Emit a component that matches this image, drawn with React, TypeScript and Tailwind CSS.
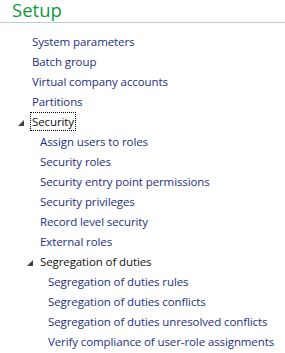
import React from 'react'

type Item = {
  label: string
  level: 1 | 2 | 3
  header?: boolean
  focused?: boolean
}

const items: Item[] = [
  { label: 'System parameters', level: 1 },
  { label: 'Batch group', level: 1 },
  { label: 'Virtual company accounts', level: 1 },
  { label: 'Partitions', level: 1 },
  { label: 'Security', level: 1, header: true, focused: true },
  { label: 'Assign users to roles', level: 2 },
  { label: 'Security roles', level: 2 },
  { label: 'Security entry point permissions', level: 2 },
  { label: 'Security privileges', level: 2 },
  { label: 'Record level security', level: 2 },
  { label: 'External roles', level: 2 },
  { label: 'Segregation of duties', level: 2, header: true },
  { label: 'Segregation of duties rules', level: 3 },
  { label: 'Segregation of duties conflicts', level: 3 },
  { label: 'Segregation of duties unresolved conflicts', level: 3 },
  { label: 'Verify compliance of user-role assignments', level: 3 },
]

const indent = {
  1: 'pl-[32px]',
  2: 'pl-[40px]',
  3: 'pl-[48px]',
} as const

function Expander() {
  return (
    <svg width="6" height="6" viewBox="0 0 6 6" className="absolute -left-[13px] top-[7px]">
      <polygon points="6,0 6,6 0,6" fill="#404040" />
    </svg>
  )
}

export default function App() {
  return (
    <div className="w-[285px] h-[353px] bg-white overflow-hidden font-['Open_Sans',sans-serif]">
      <div className="pl-[12px] h-[23px] border-b border-[#b9cde0] text-[18.5px] leading-[20px] text-[#0c9a3c]">
        Setup
      </div>
      <div className="pt-[9px]">
        {items.map((it) => (
          <div key={it.label} className={`h-[19.95px] flex items-center ${indent[it.level]}`}>
            <span
              className={`relative text-[11.5px] leading-[17px] tracking-[-0.1px] whitespace-nowrap ${
                it.header ? 'text-[#111]' : 'text-[#1e2f82]'
              } ${it.focused ? 'outline outline-1 outline-dotted outline-black px-[1px] -ml-[1px]' : ''}`}
            >
              {it.header && <Expander />}
              {it.label}
            </span>
          </div>
        ))}
      </div>
    </div>
  )
}
